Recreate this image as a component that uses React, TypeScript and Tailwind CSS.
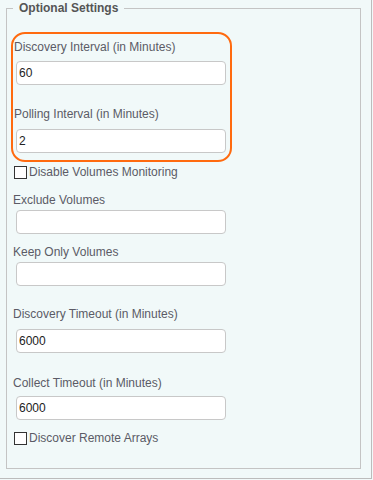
const TextField = ({ label, value, labelClass, inputClass }: { label: string; value?: string; labelClass: string; inputClass: string }) => (
  <div className="flex flex-col">
    <label className={`leading-[16px] ${labelClass}`}>{label}</label>
    <input
      readOnly
      value={value ?? ""}
      className={`ml-[3px] h-[24px] w-[210px] rounded-[4px] border border-[#c8c8c8] bg-white px-[2px] text-[12px] text-[#222] outline-none ${inputClass}`}
    />
  </div>
);

const Check = ({ label, className }: { label: string; className: string }) => (
  <div className={`flex h-[13px] items-center gap-[2px] ${className}`}>
    <span className="h-[13px] w-[13px] border border-[#333] bg-white" />
    <span className="leading-[13px]">{label}</span>
  </div>
);

export default function App() {
  return (
    <div className="h-[480px] w-[373px] bg-[#f1f9f9] font-['Liberation_Sans',Arial,sans-serif] text-[12px] text-[#5b5b66]">
      <div className="h-[479px] w-[372px] border-b border-r border-[#bcbcbc] pl-[6px] pt-0">
        <fieldset className="h-[469px] w-[355px] border border-[#c4c4c4] pb-0 pl-[7px] pr-0 pt-0">
          <legend className="ml-[-1px] px-[6px] text-[12px] font-bold leading-[16px] text-[#555]">Optional Settings</legend>

          <div className="ml-[-3px] mt-[16px] w-[221px] rounded-[14px] border-2 border-[#ff6a0f] pb-[7px] pl-0 pt-[5px]">
            <TextField label="Discovery Interval (in Minutes)" value="60" labelClass="ml-[1px]" inputClass="mt-[6px]" />
            <TextField label="Polling Interval (in Minutes)" value="2" labelClass="ml-[1px] mt-[21px]" inputClass="mt-[7px]" />
          </div>

          <Check label="Disable Volumes Monitoring" className="mt-[4px]" />

          <div className="-ml-[1px]">
            <TextField label="Exclude Volumes" labelClass="mt-[13px]" inputClass="mt-[2px]" />
            <TextField label="Keep Only Volumes" labelClass="mt-[10px]" inputClass="mt-[2px]" />
            <TextField label="Discovery Timeout (in Minutes)" value="6000" labelClass="mt-[20px]" inputClass="mt-[7px]" />
            <TextField label="Collect Timeout (in Minutes)" value="6000" labelClass="mt-[22px]" inputClass="mt-[5px]" />
          </div>

          <Check label="Discover Remote Arrays" className="mt-[12px]" />
        </fieldset>
      </div>
    </div>
  );
}
